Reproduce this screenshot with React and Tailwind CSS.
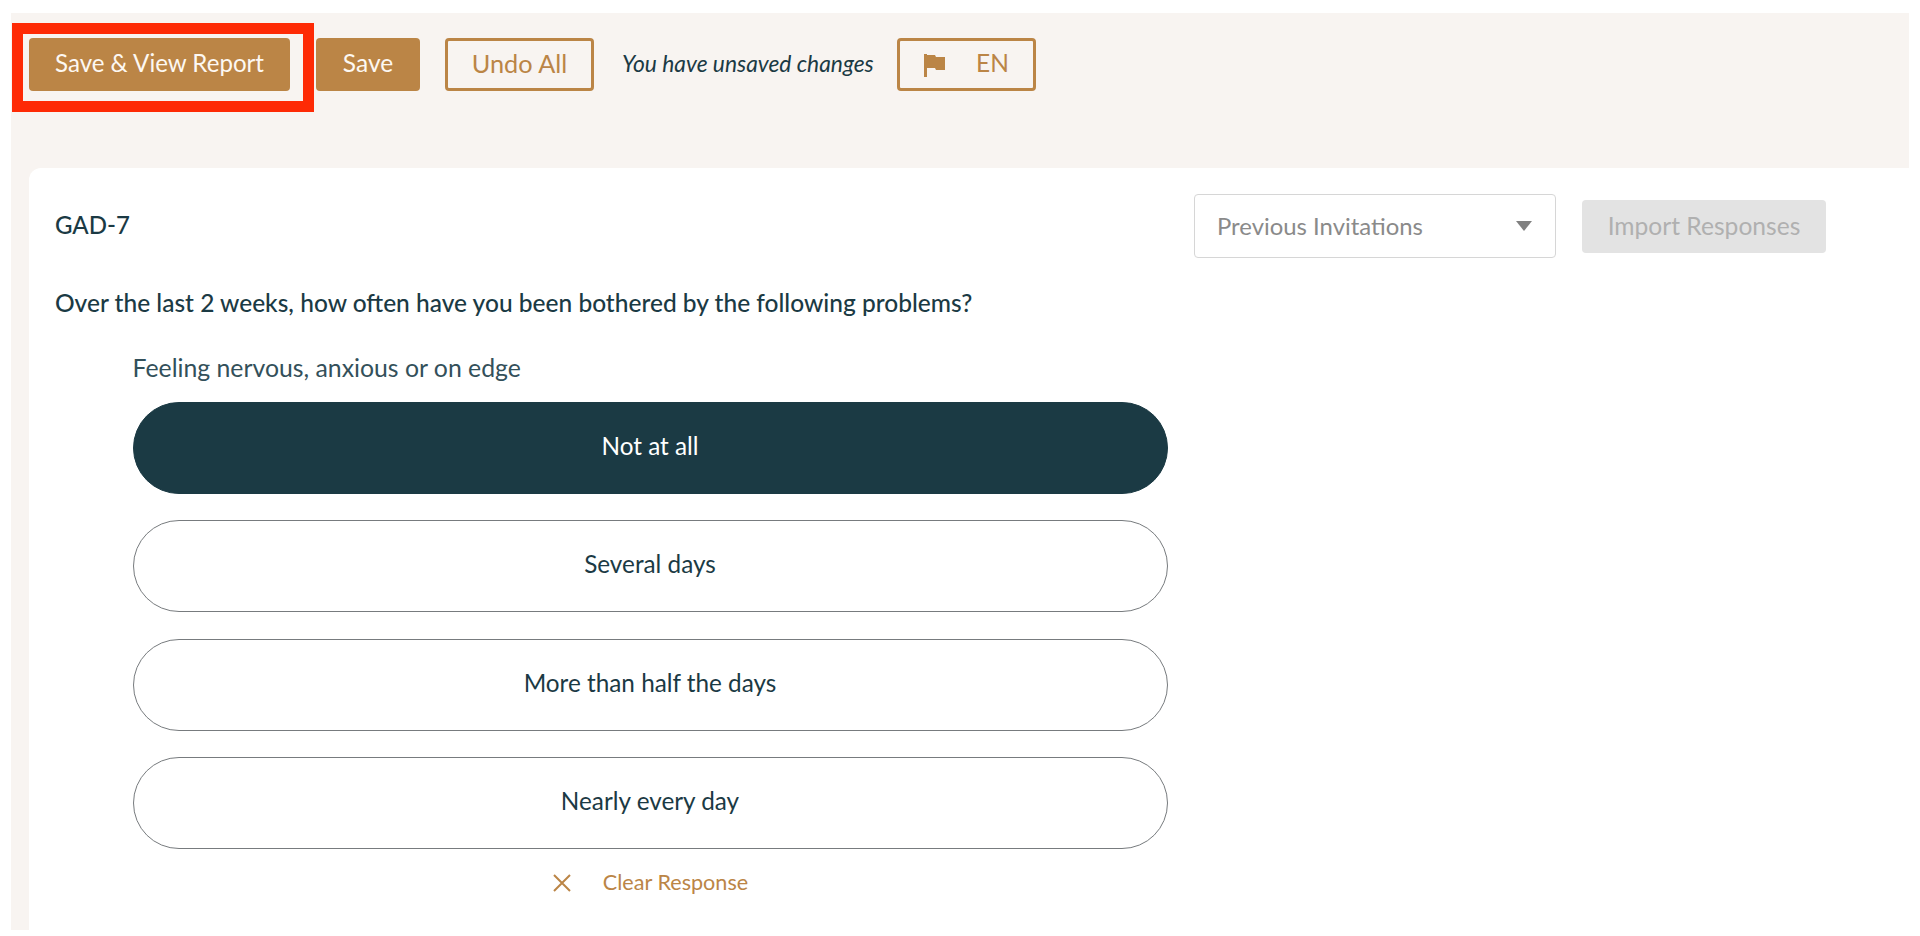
import React from "react";

function Choice({ label, selected }) {
  return (
    <button
      className={
        "h-[92px] w-[1035px] rounded-full border pb-[3px] text-[24.3px] leading-none flex items-center justify-center " +
        (selected
          ? "bg-[#1b3a44] border-[#1b3a44] text-white"
          : "bg-white border-[#777b7e] text-[#1b3a44]")
      }
    >
      {label}
    </button>
  );
}

export default function App() {
  return (
    <div className="min-h-[936px] w-[1920px] overflow-hidden bg-white pl-[11px] pt-[13px] font-['Lato',sans-serif] text-[#1b3a44]">
      <div className="flex h-[917px] w-[1898px] flex-col bg-[#f8f4f1]">
        <div className="flex h-[155px] shrink-0 items-start pl-[1px] pt-[10px]">
          <div className="flex h-[89px] w-[302px] shrink-0 items-start border-[11px] border-[#fe2a05] pl-[6px] pt-[4px]">
            <button className="flex h-[53px] w-[261px] shrink-0 items-center justify-center rounded-[4px] bg-[#bb8546] pb-[2px] text-[24.1px] text-[#fdf8f2]">
              Save &amp; View Report
            </button>
          </div>
          <div className="mt-[15px] flex items-center">
            <button className="ml-[2px] flex h-[53px] w-[104px] items-center justify-center rounded-[4px] bg-[#bb8546] pb-[2px] text-[24.5px] text-[#fdf8f2]">
              Save
            </button>
            <button className="ml-[25px] flex h-[53px] w-[149px] items-center justify-center rounded-[4px] border-[3px] border-[#bb8546] pb-[2px] text-[25.3px] text-[#bb8546]">
              Undo All
            </button>
            <span className="ml-[28px] mb-[2px] w-[250px] whitespace-nowrap text-[22.8px] italic text-[#1b3a44]">
              You have unsaved changes
            </span>
            <button className="ml-[25px] flex h-[53px] w-[139px] items-center rounded-[4px] border-[3px] border-[#bb8546] pb-[2px] pl-[24px] text-[24.5px] text-[#bb8546]">
              <svg width="22" height="24" viewBox="0 0 22 24" fill="#bb8546" className="mt-[3px] shrink-0">
                <path d="M0 1h3v23H0z" />
                <path d="M3 2h8l1 2h9v13h-9l-1-2H3z" />
              </svg>
              <span className="ml-[30px]">EN</span>
            </button>
          </div>
        </div>
        <div className="ml-[18px] flex-1 rounded-tl-[12px] bg-white">
          <div className="flex items-start pl-[26px] pr-[83px] pt-[26px]">
            <h2 className="mt-[13px] text-[24px] font-medium leading-[36px] text-[#1b3a44]">GAD-7</h2>
            <div className="ml-auto flex items-center">
              <div className="flex h-[64px] w-[362px] items-center justify-between rounded-[4px] border border-[#d6d6d6] bg-white pb-[1px] pl-[22px] pr-[23px] text-[23.9px] text-[#8a8a8a]">
                <span>Previous Invitations</span>
                <svg width="16" height="10" viewBox="0 0 16 10" fill="#808080">
                  <path d="M0 0h16L8 10z" />
                </svg>
              </div>
              <button className="ml-[26px] flex h-[53px] w-[244px] items-center justify-center rounded-[4px] bg-[#e3e3e3] text-[24.6px] text-[#b0b0b0]">
                Import Responses
              </button>
            </div>
          </div>
          <p className="ml-[26px] mt-[27px] text-[24.5px] font-medium leading-[36px] text-[#1b3a44]">
            Over the last 2 weeks, how often have you been bothered by the following problems?
          </p>
          <div className="ml-[103.5px] mt-[31px] flex flex-col">
            <p className="text-[24.8px] leading-[32px] text-[#33505a]">Feeling nervous, anxious or on edge</p>
            <div className="mt-[17.5px] flex flex-col gap-[26.5px]">
              <Choice label="Not at all" selected />
              <Choice label="Several days" />
              <Choice label="More than half the days" />
              <Choice label="Nearly every day" />
            </div>
            <button className="mt-[16.5px] flex w-[1035px] items-center justify-center pl-[2px] text-[21.6px] text-[#bb8546]">
              <svg width="18" height="18" viewBox="0 0 18 18" fill="none" stroke="#bb8546" strokeWidth="2" className="mr-[32px] ml-[-1px] mt-[2px]">
                <path d="M1 1l16 16M17 1L1 17" />
              </svg>
              Clear Response
            </button>
          </div>
        </div>
      </div>
    </div>
  );
}
